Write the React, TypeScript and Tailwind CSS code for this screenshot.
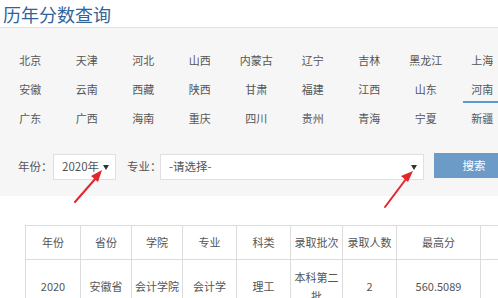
const rows = [
  ["北京", "天津", "河北", "山西", "内蒙古", "辽宁", "吉林", "黑龙江", "上海"],
  ["安徽", "云南", "西藏", "陕西", "甘肃", "福建", "江西", "山东", "河南"],
  ["广东", "广西", "海南", "重庆", "四川", "贵州", "青海", "宁夏", "新疆"],
];

const headers = ["年份", "省份", "学院", "专业", "科类", "录取批次", "录取人数", "最高分", "最低分"];
const widths = ["w-[55px]", "w-[51px]", "w-[51px]", "w-[54px]", "w-[54px]", "w-[52px]", "w-[54px]", "w-[84px]", "w-[130px]"];
const data = ["2020", "安徽省", "会计学院", "会计学", "理工", "本科第二批", "2", "560.5089", "560.5089"];

function Caret() {
  return <span className="w-0 h-0 border-x-[3px] border-x-transparent border-t-[5px] border-t-[#333]" />;
}

export default function App() {
  return (
    <div
      className="relative w-[498px] h-[298px] overflow-hidden bg-white text-[#555]"
      style={{ fontFamily: '"Noto Sans CJK SC", "Noto Sans", sans-serif' }}
    >
      {/* Title */}
      <div className="h-[28px] border-b border-[#e3e3e3] pl-[3px] flex items-center">
        <h1 className="text-[18px] leading-none text-[#2f6399]">历年分数查询</h1>
      </div>

      {/* Filter panel */}
      <div className="bg-[#f6f6f6] pt-[18px] pb-[16px]">
        <div className="flex flex-col pl-[2px]">
          {rows.map((row, ri) => (
            <div key={ri} className="flex h-[29px]">
              {row.map((p) => (
                <div key={p} className="w-[56.5px] shrink-0 flex items-center justify-center text-[11px]">
                  <span className="relative whitespace-nowrap">
                    {p}
                    {p === "河南" && (
                      <span className="absolute left-[-8px] right-[-8px] top-[20px] h-[2px] bg-[#5b9bd5]" />
                    )}
                  </span>
                </div>
              ))}
            </div>
          ))}
        </div>

        {/* Year / major / search */}
        <div className="flex items-center mt-[21px] pl-[18px] text-[11.5px] whitespace-nowrap">
          <span className="w-[35px] shrink-0">年份：</span>
          <div className="w-[63px] h-[26px] shrink-0 bg-white border border-[#e0e0e0] flex items-center justify-between pl-[8px] pr-[6px]">
            <span>2020年</span>
            <Caret />
          </div>
          <span className="ml-[11px] w-[33px] shrink-0">专业：</span>
          <div className="w-[264px] h-[26px] shrink-0 bg-white border border-[#e0e0e0] flex items-center justify-between pl-[8px] pr-[6px]">
            <span>-请选择-</span>
            <Caret />
          </div>
          <button className="ml-[10px] -mt-[3px] w-[80px] h-[25px] shrink-0 bg-[#6d9bc7] text-white text-[11.5px] flex items-center justify-center">
            搜索
          </button>
        </div>
      </div>

      {/* Results */}
      <div className="ml-[4px] w-max bg-white pt-[29px] pl-[21px]">
        <table className="border-collapse text-[11px] table-fixed w-[585px]">
          <thead>
            <tr className="h-[34px]">
              {headers.map((h, i) => (
                <th key={h} className={`${widths[i]} border border-[#dcdcdc] font-normal text-center whitespace-nowrap`}>
                  {h}
                </th>
              ))}
            </tr>
          </thead>
          <tbody>
            <tr className="h-[54px]">
              {data.map((d, i) => (
                <td key={i} className={`${widths[i]} border border-[#dcdcdc] text-center px-[3px] leading-[19px]`}>
                  {d}
                </td>
              ))}
            </tr>
          </tbody>
        </table>
      </div>

      {/* Red annotation arrows */}
      <svg className="absolute left-0 top-0 pointer-events-none" width="498" height="298">
        <line x1="75" y1="202" x2="96" y2="178" stroke="#e3262b" strokeWidth="2" strokeLinecap="round" />
        <polygon points="102,170 91,176 98,182" fill="#e3262b" />
        <line x1="385" y1="207" x2="406" y2="179" stroke="#e3262b" strokeWidth="2" strokeLinecap="round" />
        <polygon points="413,171 401,176 408,182" fill="#e3262b" />
      </svg>
    </div>
  );
}
